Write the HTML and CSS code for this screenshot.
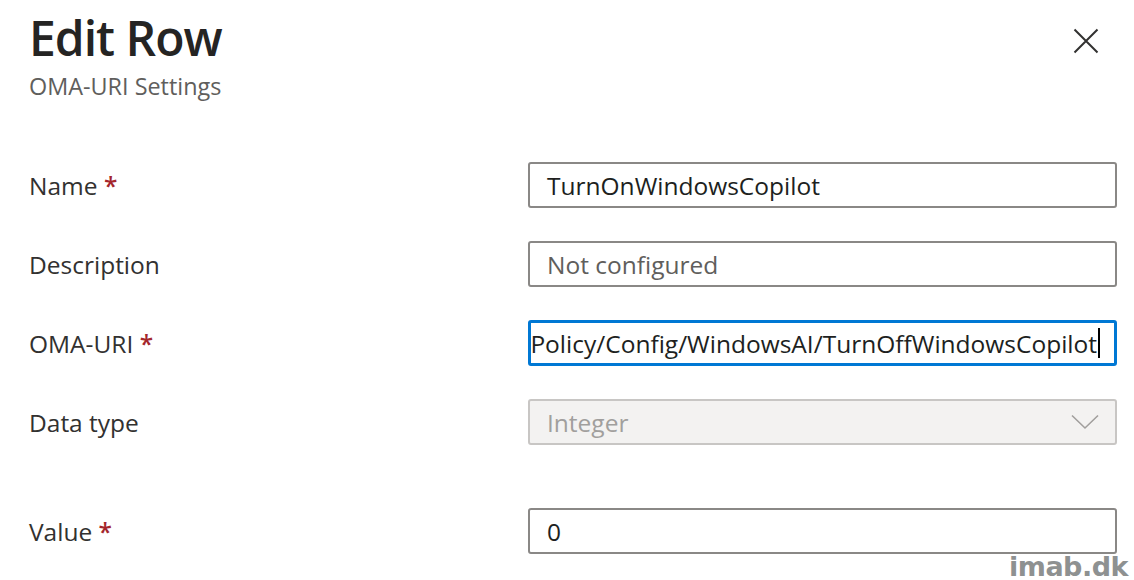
FILE: index.html
```html
<!DOCTYPE html>
<html>
<head>
<meta charset="utf-8">
<link rel="stylesheet" href="styles.css">
</head>
<body>
<div class="panel">
  <header class="head">
    <div class="titles">
      <h1 class="title">Edit Row</h1>
      <div class="subtitle">OMA-URI Settings</div>
    </div>
    <button class="close" aria-label="Close">
      <svg width="26" height="26" viewBox="0 0 26 26"><path d="M1.5 1.5 L24.5 24.5 M24.5 1.5 L1.5 24.5" stroke="#323130" stroke-width="2" fill="none"/></svg>
    </button>
  </header>
  <div class="form">
    <div class="row">
      <div class="label">Name <span class="req">*</span></div>
      <div class="field"><span class="val">TurnOnWindowsCopilot</span></div>
    </div>
    <div class="row">
      <div class="label">Description</div>
      <div class="field"><span class="ph">Not configured</span></div>
    </div>
    <div class="row">
      <div class="label">OMA-URI <span class="req">*</span></div>
      <div class="field focused"><span class="val scroll">Policy/Config/WindowsAI/TurnOffWindowsCopilot<span class="caret"></span></span></div>
    </div>
    <div class="row">
      <div class="label">Data type</div>
      <div class="field disabled"><span class="dis">Integer</span>
        <svg class="chev" width="28" height="16" viewBox="0 0 28 16"><path d="M1 1.5 L14 14 L27 1.5" stroke="#a19f9d" stroke-width="1.6" fill="none"/></svg>
      </div>
    </div>
    <div class="row value-row">
      <div class="label">Value <span class="req">*</span></div>
      <div class="field"><span class="val">0</span></div>
    </div>
  </div>
  <div class="watermark">imab.dk</div>
</div>
</body>
</html>
```

FILE: styles.css
```css
* { box-sizing: border-box; }
html, body { margin: 0; padding: 0; background: #fff; }
body {
  font-family: "Open Sans", "Noto Sans", sans-serif;
  color: #323130;
  width: 1134px;
  height: 580px;
  overflow: hidden;
}
.panel {
  position: relative;
  height: 580px;
  padding: 0 17px 0 29px;
}
.head {
  display: flex;
  justify-content: space-between;
  align-items: flex-start;
  height: 162px;
}
.title {
  margin: 0;
  font-size: 48px;
  font-weight: 600;
  line-height: 60px;
  padding-top: 8px;
  letter-spacing: -1px;
  color: #252423;
}
.subtitle {
  font-size: 23.4px;
  line-height: 28px;
  color: #605e5c;
  margin-top: 4px;
}
.close {
  border: 0;
  background: none;
  padding: 0;
  margin: 28px 18px 0 0;
  width: 26px;
  height: 26px;
  cursor: pointer;
}
.form {
  display: flex;
  flex-direction: column;
  gap: 33px;
}
.row {
  display: flex;
  align-items: center;
  height: 46px;
}
.value-row { margin-top: 30px; }
.label {
  width: 499px;
  font-size: 24.5px;
  color: #323130;
}
.req { color: #a4262c; font-weight: 600; }
.field {
  width: 589px;
  height: 46px;
  border: 2px solid #8a8886;
  border-radius: 3px;
  display: flex;
  align-items: center;
  padding: 0 17px;
  font-size: 24.5px;
  overflow: hidden;
  white-space: nowrap;
  background: #fff;
}
.val { color: #201f1e; }
.ph { color: #605e5c; }
.focused {
  border: 3px solid #0078d4;
  justify-content: flex-end;
  padding: 0 14px 0 0;
}
.scroll { flex-shrink: 0; display: flex; align-items: center; }
.caret {
  display: inline-block;
  width: 2px;
  height: 30px;
  background: #000;
  margin-left: 1px;
}
.disabled {
  background: #f3f2f1;
  border-color: #c8c6c4;
  justify-content: space-between;
  padding-right: 16px;
}
.dis { color: #a19f9d; }
.watermark {
  position: absolute;
  right: 6px;
  bottom: -2px;
  font-family: "DejaVu Sans", sans-serif;
  font-weight: 900;
  font-size: 27px;
  line-height: 30px;
  color: #8e9191;
  letter-spacing: -0.5px;
}
```
